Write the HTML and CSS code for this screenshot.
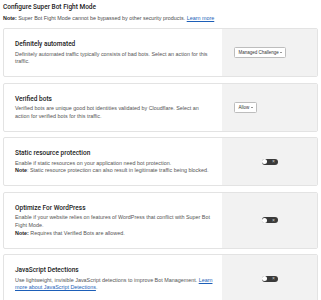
FILE: index.html
```html
<!DOCTYPE html>
<html lang="en">
<head>
<meta charset="utf-8">
<title>Configure Super Bot Fight Mode</title>
<link rel="stylesheet" href="styles.css">
</head>
<body>
<div class="page">
  <h2 class="title">Configure Super Bot Fight Mode</h2>
  <p class="note"><b>Note:</b> Super Bot Fight Mode cannot be bypassed by other security products. <a href="#">Learn more</a></p>
  <div class="cards">
    <section class="card">
      <div class="card-main">
        <h3 class="card-title">Definitely automated</h3>
        <p class="desc">Definitely automated traffic typically consists of bad bots. Select an action for this traffic.</p>
      </div>
      <div class="card-side side-select">
        <span class="select">Managed Challenge <span class="caret"></span></span>
      </div>
    </section>
    <section class="card">
      <div class="card-main">
        <h3 class="card-title">Verified bots</h3>
        <p class="desc">Verified bots are unique good bot identities validated by Cloudflare. Select an action for verified bots for this traffic.</p>
      </div>
      <div class="card-side side-select">
        <span class="select">Allow <span class="caret"></span></span>
      </div>
    </section>
    <section class="card">
      <div class="card-main">
        <h3 class="card-title">Static resource protection</h3>
        <p class="desc">Enable if static resources on your application need bot protection.</p>
        <p class="desc"><b>Note</b>: Static resource protection can also result in legitimate traffic being blocked.</p>
      </div>
      <div class="card-side side-toggle">
        <span class="toggle"><span class="knob"></span><span class="x">&#215;</span></span>
      </div>
    </section>
    <section class="card">
      <div class="card-main">
        <h3 class="card-title">Optimize For WordPress</h3>
        <p class="desc">Enable if your website relies on features of WordPress that conflict with Super Bot Fight Mode.</p>
        <p class="desc"><b>Note:</b> Requires that Verified Bots are allowed.</p>
      </div>
      <div class="card-side side-toggle">
        <span class="toggle"><span class="knob"></span><span class="x">&#215;</span></span>
      </div>
    </section>
    <section class="card">
      <div class="card-main">
        <h3 class="card-title">JavaScript Detections</h3>
        <p class="desc">Use lightweight, invisible JavaScript detections to improve Bot Management. <a href="#">Learn more about JavaScript Detections</a>.</p>
      </div>
      <div class="card-side side-toggle">
        <span class="toggle"><span class="knob"></span><span class="x">&#215;</span></span>
      </div>
    </section>
  </div>
</div>
</body>
</html>
```

FILE: styles.css
```css
* { box-sizing: border-box; }
html, body { margin: 0; padding: 0; background: #fff; }
body {
  font-family: "Liberation Sans", Arial, sans-serif;
  color: #36393a;
}
.page {
  padding: 3px 3px 0 3px;
}
.title {
  margin: 0;
  font-family: Roboto, "Liberation Sans", sans-serif;
  font-size: 6.5px;
  line-height: 8px;
  font-weight: 500;
  color: #222;
}
.note {
  margin: 4px 0 0 0;
  font-size: 5.4px;
  line-height: 7px;
  color: #4d4d4d;
}
.note b { color: #222; font-weight: 700; }
a { color: #1d5fb8; text-decoration: underline; }
.cards {
  margin-top: 6px;
  display: flex;
  flex-direction: column;
  gap: 5.5px;
}
.card {
  display: grid;
  grid-template-columns: 1fr 95px;
  border: 1px solid #e3e3e3;
  border-radius: 2px;
  overflow: hidden;
  background: #fff;
}
.card-main {
  padding: 11px 8px 10px 11px;
}
.card-title {
  margin: 0 0 2.5px 0;
  font-family: Roboto, "Liberation Sans", sans-serif;
  font-size: 6.5px;
  line-height: 8px;
  font-weight: 500;
  color: #222;
}
.desc {
  margin: 0;
  font-size: 5.4px;
  line-height: 7.8px;
  color: #555;
}
.desc b { color: #222; }
.card-side {
  background: #f2f2f2;
  display: flex;
  align-items: center;
}
.side-select { padding-left: 12px; }
.side-toggle { justify-content: center; }
.select {
  display: inline-flex;
  align-items: center;
  gap: 1.5px;
  height: 11px;
  padding: 0 3px 0 3.5px;
  background: #fff;
  border: 1px solid #bdbdbd;
  border-radius: 1.5px;
  font-size: 4.5px;
  color: #333;
}
.caret {
  width: 0; height: 0;
  border-left: 1.4px solid transparent;
  border-right: 1.4px solid transparent;
  border-top: 1.8px solid #333;
}
.toggle {
  position: relative;
  width: 16px;
  height: 6px;
  border-radius: 3px;
  background: #3a3a3a;
  display: flex;
  align-items: center;
  justify-content: flex-end;
  padding-right: 2.5px;
}
.knob {
  position: absolute;
  left: 0.5px;
  top: 0.5px;
  width: 5px;
  height: 5px;
  border-radius: 50%;
  background: #fff;
}
.x {
  font-size: 5px;
  line-height: 5px;
  color: #cfcfcf;
}
```
